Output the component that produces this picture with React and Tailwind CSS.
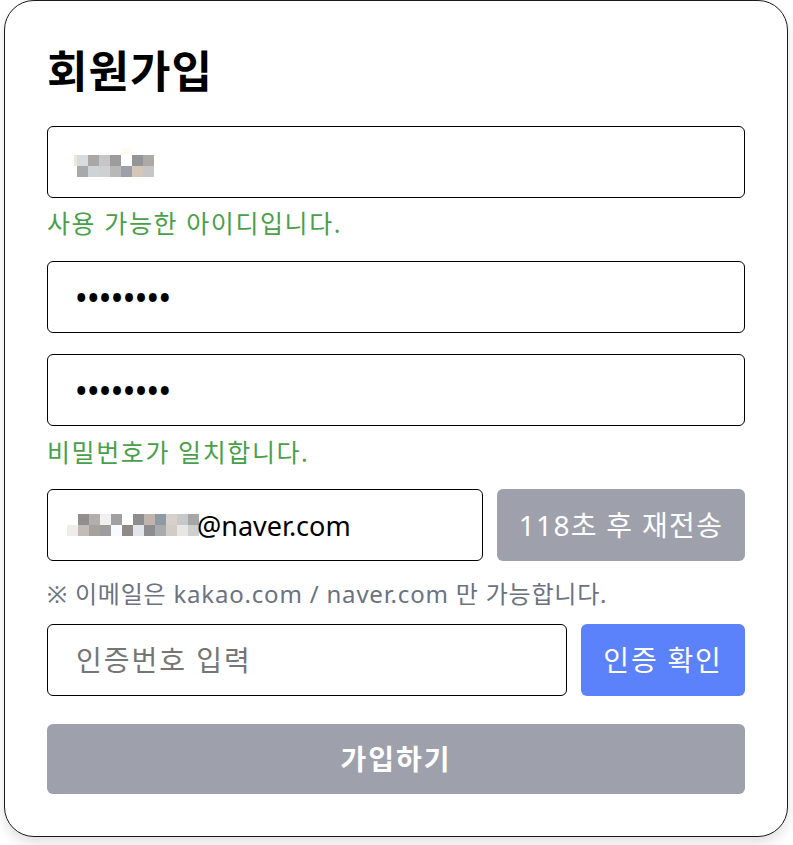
import React from "react";

const font = { fontFamily: '"Noto Sans", "Noto Sans CJK KR", sans-serif' };

const idCells = [
  ["#d8dcdf", "#a9a8a7", "#c6c6c6", "#9c9c9c", "#ffffff", "#949596", "#ada9a5"],
  ["#a7a9ad", "#cfd2d6", "#d0d0d0", "#b8b8b8", "#9da0aa", "#d4c6b8", "#c6c6c6"],
];
const emailCells = [
  ["#ffffff", "#928e8c", "#b1afad", "#f1f0f0", "#a0a0a0", "#ffffff", "#8e8e8e", "#c0b5ad", "#8e9aa5", "#d6d1cd", "#c7c8cc", "#a6a6a6"],
  ["#f0ece8", "#c1bcb8", "#a7a19b", "#9d9d9d", "#f8fbfd", "#8f8a87", "#e3e6e9", "#8d8d8f", "#a8abad", "#d2ccc6", "#e6e6e2", "#cfcfcf"],
];

function Mosaic({ rows, w }) {
  return (
    <div className="flex flex-col">
      {rows.map((r, i) => (
        <div key={i} className="flex">
          {r.map((c, j) => (
            <span key={j} className="block h-[11px]" style={{ width: w, background: c }} />
          ))}
        </div>
      ))}
    </div>
  );
}

export default function App() {
  return (
    <div className="bg-white min-h-[845px] pl-[4px]" style={font}>
      <div className="w-[784px] h-[837px] box-border border border-[#1a1a1a] rounded-[30px] bg-white shadow-[0_6px_12px_rgba(0,0,0,0.12)] px-[42px] pt-[40px] pb-[41px] flex flex-col">
        <h1 className="text-[44px] leading-[60px] font-bold text-black tracking-[1px]">회원가입</h1>

        <div className="mt-[25px] h-[72px] border border-black rounded-[6px] flex items-center pl-[26px]">
          <div className="flex items-start">
            <span className="block w-[3px] h-[11px] mt-[7px] bg-[#efe5e0]" />
            <div className="flex flex-col">
              <div className="flex h-[7px]">
                <span className="block w-[44px]" />
                <span className="block w-[11px] h-[7px] bg-[#fffaf5]" />
              </div>
              <Mosaic rows={idCells} w={11} />
            </div>
          </div>
        </div>
        <p className="mt-[7px] mb-[20px] text-[25px] leading-[36px] tracking-[1.6px] text-[#4a9f4a]">사용 가능한 아이디입니다.</p>

        <input
          type="password"
          readOnly
          value="12345678"
          className="h-[72px] border border-black rounded-[6px] px-[28px] text-[28px] tracking-[1.4px] font-bold text-black outline-none"
          style={font}
        />
        <input
          type="password"
          readOnly
          value="12345678"
          className="mt-[21px] h-[72px] border border-black rounded-[6px] px-[28px] text-[28px] tracking-[1.4px] font-bold text-black outline-none"
          style={font}
        />
        <p className="mt-[8px] mb-[19px] text-[25px] leading-[36px] tracking-[1.6px] text-[#4a9f4a]">비밀번호가 일치합니다.</p>

        <div className="flex gap-[14px]">
          <div className="w-[436px] h-[72px] border border-black rounded-[6px] flex items-center pl-[19px] shrink-0">
            <Mosaic rows={emailCells} w={11} />
            <span className="text-[27px] text-black leading-none ml-[-2px]">@naver.com</span>
          </div>
          <button className="flex-1 h-[72px] rounded-[6px] bg-[#9ea1ac] text-white text-[28px] tracking-[1.3px]">118초 후 재전송</button>
        </div>
        <p className="mt-[15px] mb-[12px] text-[24px] leading-[36px] tracking-[0.8px] text-[#6b7280]">※ 이메일은 kakao.com / naver.com 만 가능합니다.</p>

        <div className="flex gap-[14px]">
          <input
            type="text"
            readOnly
            placeholder="인증번호 입력"
            className="w-[520px] h-[72px] border border-black rounded-[6px] px-[28px] text-[28px] tracking-[2px] text-black placeholder:text-[#757575] outline-none shrink-0"
            style={font}
          />
          <button className="flex-1 h-[72px] rounded-[6px] bg-[#5b82fb] text-white text-[28px] tracking-[1.8px]">인증 확인</button>
        </div>

        <button className="mt-[28px] h-[70px] rounded-[6px] bg-[#9ea1ac] text-white text-[28px] tracking-[2px] font-bold">가입하기</button>
      </div>
    </div>
  );
}
